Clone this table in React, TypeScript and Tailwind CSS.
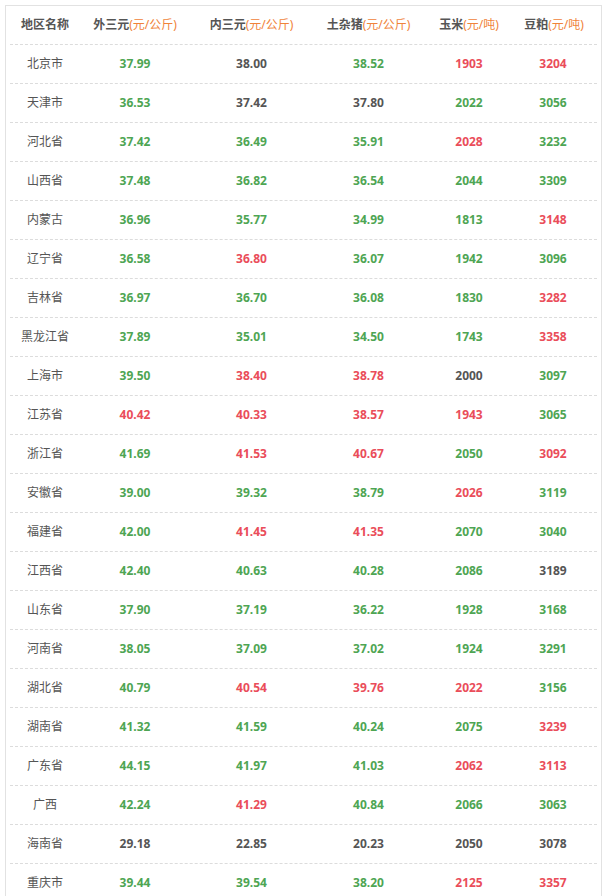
type Tone = 'g' | 'r' | 'n'

interface Cell {
  value: string
  tone: Tone
}

interface Row {
  region: string
  cells: Cell[]
}

const toneClass: Record<Tone, string> = {
  g: 'text-[#4ea553]',
  r: 'text-[#ea4d5a]',
  n: 'text-[#555555]',
}

// raw rows: region, then value/tone pairs
const raw: [string, ...string[]][] = [
  ['北京市', '37.99 g', '38.00 n', '38.52 g', '1903 r', '3204 r'],
  ['天津市', '36.53 g', '37.42 n', '37.80 n', '2022 g', '3056 g'],
  ['河北省', '37.42 g', '36.49 g', '35.91 g', '2028 r', '3232 g'],
  ['山西省', '37.48 g', '36.82 g', '36.54 g', '2044 g', '3309 g'],
  ['内蒙古', '36.96 g', '35.77 g', '34.99 g', '1813 g', '3148 r'],
  ['辽宁省', '36.58 g', '36.80 r', '36.07 g', '1942 g', '3096 g'],
  ['吉林省', '36.97 g', '36.70 g', '36.08 g', '1830 g', '3282 r'],
  ['黑龙江省', '37.89 g', '35.01 g', '34.50 g', '1743 g', '3358 r'],
  ['上海市', '39.50 g', '38.40 r', '38.78 r', '2000 n', '3097 g'],
  ['江苏省', '40.42 r', '40.33 r', '38.57 r', '1943 r', '3065 g'],
  ['浙江省', '41.69 g', '41.53 r', '40.67 r', '2050 g', '3092 r'],
  ['安徽省', '39.00 g', '39.32 g', '38.79 g', '2026 r', '3119 g'],
  ['福建省', '42.00 g', '41.45 r', '41.35 r', '2070 g', '3040 g'],
  ['江西省', '42.40 g', '40.63 g', '40.28 g', '2086 g', '3189 n'],
  ['山东省', '37.90 g', '37.19 g', '36.22 g', '1928 g', '3168 g'],
  ['河南省', '38.05 g', '37.09 g', '37.02 g', '1924 g', '3291 g'],
  ['湖北省', '40.79 g', '40.54 r', '39.76 r', '2022 r', '3156 g'],
  ['湖南省', '41.32 g', '41.59 g', '40.24 g', '2075 g', '3239 r'],
  ['广东省', '44.15 g', '41.97 g', '41.03 g', '2062 r', '3113 r'],
  ['广西', '42.24 g', '41.29 r', '40.84 g', '2066 g', '3063 g'],
  ['海南省', '29.18 n', '22.85 n', '20.23 n', '2050 n', '3078 n'],
  ['重庆市', '39.44 g', '39.54 g', '38.20 g', '2125 r', '3357 r'],
]

const rows: Row[] = raw.map(([region, ...rest]) => ({
  region,
  cells: rest.map((s) => {
    const [value, tone] = s.split(' ')
    return { value, tone: tone as Tone }
  }),
}))

const headers: { name: string; unit?: string }[] = [
  { name: '地区名称' },
  { name: '外三元', unit: '(元/公斤)' },
  { name: '内三元', unit: '(元/公斤)' },
  { name: '土杂猪', unit: '(元/公斤)' },
  { name: '玉米', unit: '(元/吨)' },
  { name: '豆粕', unit: '(元/吨)' },
]

const grid = 'grid grid-cols-[70px_110px_123px_111px_90px_84px] items-center'

export default function App() {
  return (
    <div
      className="min-h-[896px] bg-white pl-[5px] pt-[5px] text-[12px] text-[#555555]"
      style={{ fontFamily: '"Noto Sans", "Noto Sans CJK SC", sans-serif' }}
    >
      <div className="w-[597px] border border-[#e2e2e2] px-[4px] pb-2">
        {/* header */}
        <div className={`${grid} h-[39px] border-b border-dashed border-[#dcdcdc]`}>
          {headers.map((h, i) => (
            <div key={h.name} className={`text-center ${i === 5 ? 'pr-[4px]' : ''}`}>
              <span className="font-bold text-[#555555]">{h.name}</span>
              {h.unit && <span className="text-[#f0833a]">{h.unit}</span>}
            </div>
          ))}
        </div>

        {rows.map((row) => (
          <div
            key={row.region}
            className={`${grid} h-[39px] border-b border-dashed border-[#dcdcdc]`}
          >
            <div className="text-center text-[#555555]">{row.region}</div>
            {row.cells.map((c, j) => (
              <div
                key={`${row.region}-${j}`}
                className={`text-center font-bold ${toneClass[c.tone]} ${j === 4 ? 'pr-[6px]' : ''}`}
              >
                {c.value}
              </div>
            ))}
          </div>
        ))}
      </div>
    </div>
  )
}
